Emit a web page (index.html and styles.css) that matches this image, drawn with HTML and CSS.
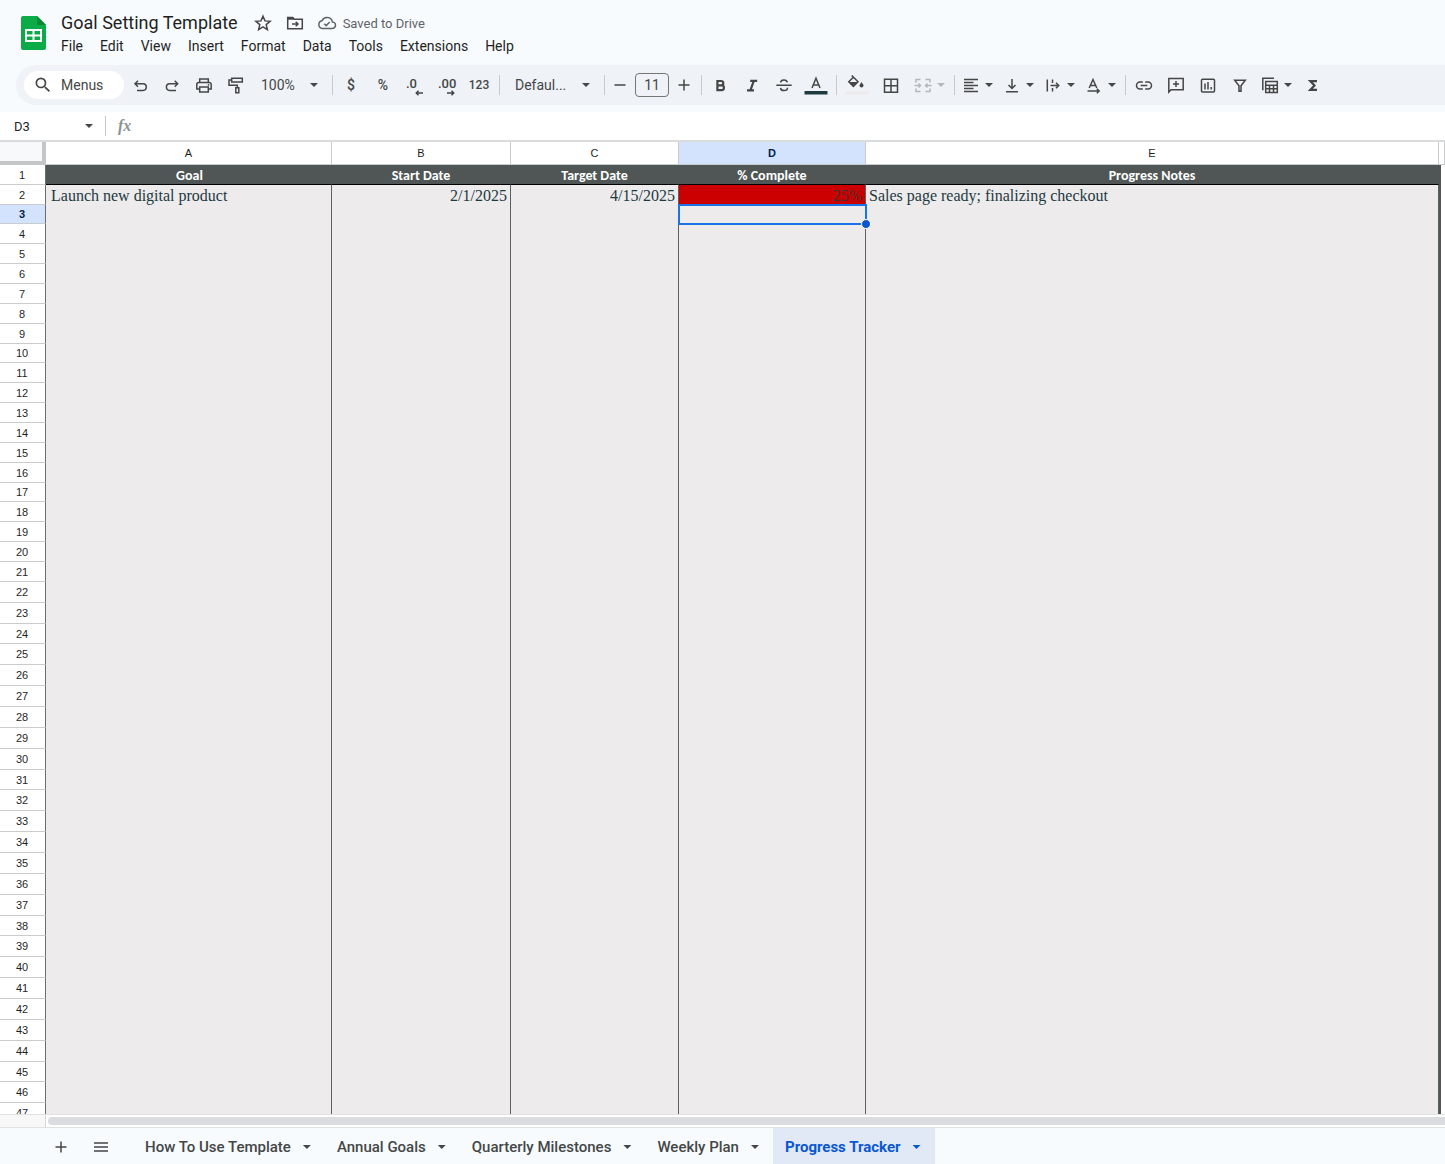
FILE: index.html
```html
<!DOCTYPE html>
<html lang="en">
<head>
<meta charset="utf-8">
<title>Goal Setting Template</title>
<link rel="stylesheet" href="styles.css">
</head>
<body>
<div class="app">
  <header class="header">
    <svg class="logo" viewBox="0 0 25 34" aria-hidden="true">
      <path fill="#0bab47" d="M2 0h14l9 9v23a2 2 0 0 1-2 2H2a2 2 0 0 1-2-2V2a2 2 0 0 1 2-2z"/>
      <path fill="#068a35" d="M16 0l9 9h-9z"/>
      <path fill="#fff" fill-rule="evenodd" d="M4 13h17v13H4zM6 15v3.500h5.500V15zM13.500 15v3.500H19V15zM6 20.500V24h5.500v-3.500zM13.500 20.500V24H19v-3.500z"/>
    </svg>
    <div class="heading">
      <div class="title-row">
        <h1 class="title">Goal Setting Template</h1>
        <button class="plain" aria-label="Star"><svg class="icon" viewBox="0 0 20 20"><path class="line" d="M10 3.200l2 4.700 5.100.4-3.900 3.300 1.200 5-4.400-2.700-4.400 2.700 1.200-5-3.900-3.300 5.100-.4z"/></svg></button>
        <button class="plain" aria-label="Move"><svg class="icon" viewBox="0 0 20 20"><path class="line" d="M2.700 4.500h5l1.600 1.700h8v9.500H2.700z"/><path d="M2 4h6l2 2.700H2z"/><path class="line" d="M7 11h6M10.700 8.700 13 11l-2.300 2.300"/></svg></button>
        <button class="saved"><svg class="icon" viewBox="0 0 20 20"><path class="line" d="M5.300 15.500h9.700a3.300 3.300 0 0 0 .4-6.600A5.500 5.500 0 0 0 5 7.800a3.900 3.900 0 0 0 .3 7.700z"/><path class="line" d="M7.300 10.700l1.900 1.900 3.500-3.600"/></svg>Saved to Drive</button>
      </div>
      <nav class="menus">
        <button class="menu">File</button><button class="menu">Edit</button><button class="menu">View</button><button class="menu">Insert</button><button class="menu">Format</button><button class="menu">Data</button><button class="menu">Tools</button><button class="menu">Extensions</button><button class="menu">Help</button>
      </nav>
    </div>
  </header>

  <div class="toolbar" role="toolbar" aria-label="Main">
    <button class="search"><svg class="icon" viewBox="0 0 24 24"><path d="M15.500 14h-.79l-.28-.27A6.471 6.471 0 0 0 16 9.500 6.500 6.500 0 1 0 9.500 16c1.610 0 3.090-.59 4.230-1.570l.27.28v.79l5 4.990L20.490 19l-4.990-5zm-6 0C7.010 14 5 11.990 5 9.500S7.010 5 9.500 5 14 7.010 14 9.500 11.990 14 9.500 14z"/></svg>Menus</button>
    <button class="tool" aria-label="Undo"><svg class="icon" viewBox="0 0 20 20"><path class="line" d="M8 5.800 5 8.800l3 3M5.200 8.800h7.800a3.300 3.300 0 0 1 0 6.600H7"/></svg></button>
    <button class="tool" aria-label="Redo"><svg class="icon" viewBox="0 0 20 20"><path class="line" d="M12.700 5.800l3 3-3 3M15.500 8.800H7.700a3.300 3.300 0 0 0 0 6.600H14"/></svg></button>
    <button class="tool" aria-label="Print"><svg class="icon" viewBox="0 0 20 20"><path class="line" d="M5.700 7.500V4h8.600v3.500M5.700 14H2.800V9.500a2 2 0 0 1 2-2h10.400a2 2 0 0 1 2 2V14h-2.900M5.700 12h8.600v5H5.700z"/><circle cx="14.500" cy="9.800" r=".9"/></svg></button>
    <button class="tool" aria-label="Paint format"><svg class="icon" viewBox="0 0 20 20"><path class="line" d="M5.700 3.200h10.600V7H5.700zM5.700 5.100H3v5.200h8.300v2.400M9.800 12.700h3v5h-3z"/></svg></button>
    <button class="zoom">100%<span class="caret"></span></button>
    <span class="sep"></span>
    <button class="tool small" aria-label="Currency">$</button>
    <button class="tool small" aria-label="Percent">%</button>
    <button class="tool digits" aria-label="Fewer decimals">.0<svg class="shift" viewBox="0 0 8 6"><path class="line" d="M8 3H1.500M3.500.8 1.300 3l2.200 2.200"/></svg></button>
    <button class="tool digits" aria-label="More decimals">.00<svg class="shift" viewBox="0 0 8 6"><path class="line" d="M0 3h6.500M4.500.8 6.700 3 4.500 5.200"/></svg></button>
    <button class="tool number">123</button>
    <span class="sep"></span>
    <button class="font">Defaul...<span class="caret"></span></button>
    <span class="sep"></span>
    <button class="step" aria-label="Smaller"><svg class="icon" viewBox="0 0 20 20"><path class="line" d="M4.500 10h11"/></svg></button>
    <input class="size" type="text" value="11" aria-label="Font size">
    <button class="step" aria-label="Larger"><svg class="icon" viewBox="0 0 20 20"><path class="line" d="M4.500 10h11M10 4.500v11"/></svg></button>
    <span class="sep"></span>
    <button class="tool" aria-label="Bold"><svg class="icon" viewBox="0 0 20 20"><path class="heavy" d="M7.400 6h3.700a2.200 2.200 0 0 1 0 4.400H7.400zM7.400 10.400h4.200a2.300 2.300 0 0 1 0 4.700H7.400z"/></svg></button>
    <button class="tool" aria-label="Italic"><svg class="icon" viewBox="0 0 20 20"><path class="heavy" d="M8.200 5.800h7M5 15.300h7M11.800 5.800 8.400 15.300"/></svg></button>
    <button class="tool" aria-label="Strikethrough"><svg class="icon" viewBox="0 0 20 20"><path class="line" d="M2.300 10.300h15.400M13.300 7.300c-.3-1.600-1.500-2.400-3.300-2.400S6.700 5.900 6.700 7.600M6.500 13c.3 1.700 1.600 2.600 3.500 2.600s3.500-1 3.500-2.800"/></svg></button>
    <button class="tool" aria-label="Text color"><svg class="icon wide" viewBox="0 0 24 20"><path class="line" d="M8 13 12 3.300 16 13M9.300 9.900h5.400"/><path fill="#1d3a3f" d="M.5 16h23v3.500H.5z"/></svg></button>
    <span class="sep"></span>
    <button class="tool fill" aria-label="Fill color"><svg class="icon wide" viewBox="0 0 24 20"><path class="line" d="M6.700.5l6.300 6.300-4.600 4.600L3.800 6.800l4.600-4.600"/><path d="M3.800 7H13l-4.600 4.600z"/><path d="M16.500 7.300s2 2.200 2 3.300a2 2 0 0 1-4 0c0-1.100 2-3.300 2-3.300z"/><path fill="#edebec" d="M.5 16h23v3.500H.5z"/></svg></button>
    <button class="tool" aria-label="Borders"><svg class="icon" viewBox="0 0 20 20"><path class="line" d="M3.500 4.300h13v13h-13zM10 4.300v13M3.500 10.800h13"/></svg></button>
    <button class="drop merge" disabled aria-label="Merge cells"><svg class="icon" viewBox="0 0 20 20"><path class="line" d="M7.500 4.500H3v3M12.500 4.500H17v3M7.500 16.500H3v-3M12.500 16.500H17v-3M1.500 10.500h6M5.500 8.500l2 2-2 2M18.500 10.500h-6M14.500 8.500l-2 2 2 2"/></svg><span class="caret"></span></button>
    <span class="sep"></span>
    <button class="drop" aria-label="Horizontal align"><svg class="icon" viewBox="0 0 20 20"><path class="line" d="M3 4.500h14M3 7.500h9.500M3 10.500h14M3 13.500h9.500M3 16.500h14"/></svg><span class="caret"></span></button>
    <button class="drop" aria-label="Vertical align"><svg class="icon" viewBox="0 0 20 20"><path class="line" d="M10 4v9M6.500 10l3.500 3.500 3.500-3.500M4 16.800h12"/></svg><span class="caret"></span></button>
    <button class="drop" aria-label="Text wrapping"><svg class="icon" viewBox="0 0 20 20"><path class="line" d="M4.300 4.500v12M9.500 4.500V8M9.500 13v3.500M7.500 10.500h8M13 7.800l2.700 2.700-2.700 2.700"/></svg><span class="caret"></span></button>
    <button class="drop" aria-label="Text rotation"><svg class="icon" viewBox="0 0 20 20"><path class="line" d="M5.200 13 9 4.500l3.800 8.500M6.500 10.500h5M3.500 16H15M12.800 13.800 15.200 16l-2.400 2.200"/></svg><span class="caret"></span></button>
    <span class="sep"></span>
    <button class="tool" aria-label="Insert link"><svg class="icon" viewBox="0 0 20 20"><path class="line" d="M8.800 7H6a3.500 3.500 0 0 0 0 7h2.800M11.200 7H14a3.500 3.500 0 0 1 0 7h-2.800M6.700 10.500h6.600"/></svg></button>
    <button class="tool" aria-label="Insert comment"><svg class="icon" viewBox="0 0 20 20"><path class="line" d="M2.800 3.500h14.400v11.300H5l-2.200 2.300zM10 6v6M7 9h6"/></svg></button>
    <button class="tool" aria-label="Insert chart"><svg class="icon" viewBox="0 0 20 20"><rect class="line" x="3.500" y="4.300" width="13" height="12.700" rx="1"/><path class="line" d="M7 8.500v6M10 7v7.500M13.200 12v2.500"/></svg></button>
    <button class="tool" aria-label="Filter"><svg class="icon" viewBox="0 0 20 20"><path class="line" d="M4.700 5.300h10.600L11 10.800v5.500H9v-5.500z"/></svg></button>
    <button class="drop" aria-label="Table views"><svg class="icon" viewBox="0 0 20 20"><path class="line" d="M2.800 15.300v-12H14M5.700 6.500h11.600v11H5.700zM5.700 10.200h11.600M5.700 13.800h11.600M9.500 10.200v7.300M13.500 10.200v7.300"/></svg><span class="caret"></span></button>
    <button class="tool" aria-label="Functions"><svg class="icon" viewBox="0 0 20 20"><path class="heavy" d="M14 6.100H7.300l4.200 4.400-4.200 4.400H14"/></svg></button>
  </div>

  <div class="formula-bar">
    <button class="name-box">D3<span class="caret"></span></button>
    <span class="sep"></span>
    <label class="fx" for="formula">fx</label>
    <input class="formula" id="formula" type="text">
  </div>

  <main class="sheet">
    <table class="grid">
      <colgroup><col class="c-row"><col class="c-a"><col class="c-b"><col class="c-c"><col class="c-d"><col class="c-e"><col class="c-end"></colgroup>
      <thead>
        <tr class="letters"><td class="corner"></td><th>A</th><th>B</th><th>C</th><th class="current">D</th><th>E</th><th></th></tr>
      </thead>
      <tbody id="rows">
        <tr class="titles"><th>1</th><td>Goal</td><td>Start Date</td><td>Target Date</td><td>% Complete</td><td>Progress Notes</td><td class="end"></td></tr>
        <tr><th>2</th><td>Launch new digital product</td><td class="right">2/1/2025</td><td class="right">4/15/2025</td><td class="right alert">25%</td><td>Sales page ready; finalizing checkout</td><td class="end"></td></tr>
        <tr><th class="current">3</th><td></td><td></td><td></td><td class="selected"><span class="handle"></span></td><td></td><td class="end"></td></tr>
      </tbody>
    </table>
  </main>

  <div class="scroll"><div class="scroll-side"></div><div class="scroll-thumb"></div></div>

  <footer class="tabs">
    <button class="tab-tool" aria-label="Add sheet"><svg class="icon" viewBox="0 0 20 20"><path class="line" d="M4.500 10h11M10 4.500v11"/></svg></button>
    <button class="tab-tool" aria-label="All sheets"><svg class="icon" viewBox="0 0 20 20"><path class="line" d="M3 6h14M3 10h14M3 14h14"/></svg></button>
    <nav class="tab-list">
      <button class="tab">How To Use Template<span class="caret"></span></button>
      <button class="tab">Annual Goals<span class="caret"></span></button>
      <button class="tab">Quarterly Milestones<span class="caret"></span></button>
      <button class="tab">Weekly Plan<span class="caret"></span></button>
      <button class="tab active">Progress Tracker<span class="caret"></span></button>
    </nav>
  </footer>
</div>
<script src="rows.js"></script>
</body>
</html>
```
FILE: styles.css
```css
* { box-sizing: border-box; }

body {
  margin: 0;
  font-family: Roboto, "Liberation Sans", sans-serif;
  color: #1f1f1f;
}

button, input {
  margin: 0;
  padding: 0;
  border: 0;
  background: none;
  font: inherit;
  color: inherit;
}

.app {
  display: flex;
  flex-direction: column;
  height: 100vh;
  overflow: hidden;
  background: #f8fbfe;
}

.icon {
  display: block;
  flex: none;
  width: 20px;
  height: 20px;
  fill: currentColor;
}
.wide { width: 24px; }
.line { fill: none; stroke: currentColor; stroke-width: 1.5; }
.heavy { fill: none; stroke: currentColor; stroke-width: 2.2; }

.caret {
  flex: none;
  width: 8px;
  height: 4px;
  background: currentColor;
  clip-path: polygon(0 0, 100% 0, 50% 100%);
}

/* Header */
.header { display: flex; gap: 15px; padding: 12px 21px 0; }
.logo { flex: none; width: 25px; height: 34px; margin-top: 4px; }
.title-row { display: flex; align-items: center; height: 22px; color: #444746; }
.title { margin: 0 15px 0 0; font-size: 18px; line-height: 22px; font-weight: 400; color: #1f1f1f; }
.plain { margin-right: 12px; }
.saved { display: flex; align-items: center; gap: 6px; font-size: 13px; color: #5f6368; }
.menus { display: flex; gap: 17px; }
.menu { font-size: 14px; line-height: 24px; }

/* Toolbar */
.toolbar {
  display: flex;
  align-items: center;
  flex: none;
  height: 40px;
  margin: 7px 0 7px 16px;
  padding-left: 8px;
  border-radius: 20px 0 0 20px;
  background: #eff2f7;
  color: #444746;
  font-size: 14px;
}
.search {
  display: flex;
  align-items: center;
  gap: 8px;
  flex: none;
  width: 100px;
  height: 28px;
  padding-left: 9px;
  border-radius: 14px;
  background: #fff;
}
.tool, .step { display: flex; align-items: center; justify-content: center; flex: none; width: 32px; height: 28px; }
.step { width: 26px; }
.fill { width: 36px; }
.small { font-weight: 500; }
.number { font-size: 12px; font-weight: 500; }
.digits { position: relative; justify-content: flex-start; padding: 0 0 4px 7px; font-size: 13px; font-weight: 500; }
.shift { position: absolute; right: 8px; bottom: 3px; width: 8px; height: 6px; }
.zoom, .font { display: flex; align-items: center; justify-content: space-between; flex: none; }
.zoom { width: 76px; padding: 0 10px 0 9px; }
.font { width: 98px; padding: 0 10px 0 13px; }
.sep { flex: none; width: 1px; height: 20px; margin: 0 2px 0 4px; background: #c7cacd; }
.size { width: 34px; height: 24px; margin: 0 2px; border: 1px solid #747775; border-radius: 4px; text-align: center; }
.drop { display: flex; align-items: center; gap: 4px; flex: none; width: 41px; padding-left: 4px; }
.merge { margin-left: 2px; color: #b5b8ba; }

/* Formula bar */
.formula-bar { display: flex; align-items: center; flex: none; height: 28px; background: #fff; color: #444746; }
.name-box { display: flex; align-items: center; justify-content: space-between; width: 101px; padding: 0 8px 0 14px; font-size: 13px; color: #1f1f1f; }
.name-box .caret { color: #444746; }
.fx { padding: 0 8px 0 10px; font-family: "Liberation Serif", serif; font-size: 16px; font-style: italic; font-weight: 700; color: #8d9296; }
.formula { flex: 1; outline: 0; }

/* Sheet */
.sheet { flex: 1; min-height: 0; overflow: hidden; border-top: 2px solid #d9dbdc; background: #fff; }
.grid { width: 100%; border-spacing: 0; table-layout: fixed; }
.c-row { width: 46px; }
.c-a { width: 286px; }
.c-b { width: 179px; }
.c-c { width: 168px; }
.c-d { width: 187px; }
.c-end { width: 6px; }

.grid th, .grid td { height: 20px; padding: 0; line-height: 16px; overflow: hidden; white-space: nowrap; }
.grid tr:nth-child(n+22) th { height: 21px; }
.grid tr:nth-child(7n+3) th { height: 19px; }
.grid tr:nth-child(7n+24) th { height: 20px; }

.grid th {
  border-bottom: 1px solid #c9cccf;
  font-family: "Liberation Sans", Arial, sans-serif;
  font-size: 11px;
  font-weight: 400;
  text-align: center;
}
.grid tbody th { padding-right: 1px; border-right: 1px solid #6a6f6e; }
.grid .letters th { height: 23px; border-right: 1px solid #c9cccf; }
.grid .corner { height: 23px; border: solid #c4c6c7; border-width: 0 4px 4px 0; background: #f8f9fa; }
.grid th.current { background: #d3e3fd; font-weight: 700; color: #041e49; }

.grid tbody td {
  height: 19px;
  padding: 0 3px;
  border-right: 1px solid #5b6160;
  background: #edebec;
  font-family: Georgia, "Liberation Serif", serif;
  font-size: 16px;
  line-height: 18px;
  vertical-align: bottom;
  color: #1d3a3f;
}
.grid tbody td:nth-child(2) { padding-left: 5px; }
.grid tbody .end { padding: 0; border-right: 4px solid #fff; background: #4f5655; }
.grid tbody .right { text-align: right; }
.grid tbody .alert { background: #cc0000; color: #4a3030; }
.grid .titles td {
  border-right-color: #4f5655;
  border-bottom: 1px solid #000;
  background: #4f5655;
  font-family: Carlito, Lato, sans-serif;
  font-size: 14px;
  line-height: 16px;
  font-weight: 700;
  text-align: center;
  color: #fff;
}
.grid .titles .end { border-right-color: #fff; border-bottom: 0; }
.grid tbody .selected { position: relative; overflow: visible; border: 0; outline: 2px solid #1a73e8; outline-offset: -1px; }
.handle { position: absolute; right: -5px; bottom: -5px; width: 10px; height: 10px; border: 1px solid #fff; border-radius: 50%; background: #0b57d0; }

/* Horizontal scroll bar */
.scroll { display: flex; flex: none; height: 14px; border: solid #dfe1e3; border-width: 1px 0; background: #fff; }
.scroll-side { width: 46px; border-right: 1px solid #d5d7d9; background: #f8f8f8; }
.scroll-thumb { flex: 1; margin: 2px 0 2px 2px; border-radius: 4px 0 0 4px; background: #dadce0; }

/* Sheet tabs */
.tabs { display: flex; flex: none; height: 36px; padding-left: 41px; color: #444746; }
.tab-tool { display: flex; align-items: center; justify-content: center; width: 40px; padding-top: 1px; }
.tab-list { display: flex; margin-left: 12px; }
.tab { display: flex; align-items: center; gap: 12px; padding: 2px 14px 0 12px; font-size: 15px; font-weight: 500; white-space: nowrap; }
.active { background: #e1e9f7; color: #0b57d0; font-weight: 700; }
```
FILE: rows.js
```js
// Fill the rest of the sheet with empty rows.
const body = document.getElementById("rows");
for (let n = 4; n <= 47; n++) {
  const row = body.insertRow();
  const head = document.createElement("th");
  head.textContent = n;
  row.append(head);
  for (let c = 0; c < 6; c++) row.insertCell();
  row.lastChild.className = "end";
}
```
